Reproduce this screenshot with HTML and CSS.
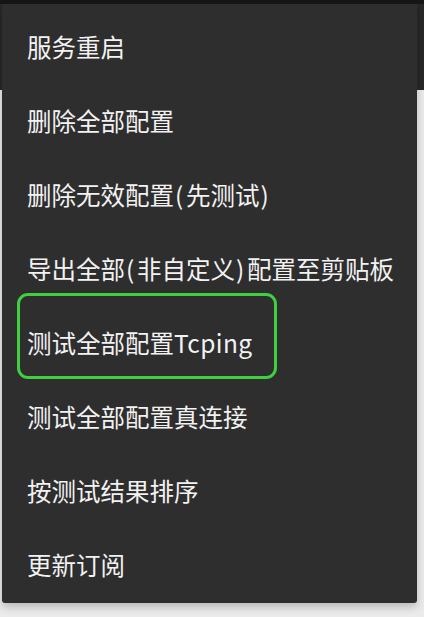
FILE: index.html
```html
<!DOCTYPE html>
<html>
<head>
  <meta charset="UTF-8" />
  <title>菜单</title>
  <link rel="stylesheet" href="styles.css">
</head>
<body>

  <div id="status-bar"></div>
  <div id="toolbar"></div>
  <div id="content"></div>

  <div id="popup-menu">
    <div class="menu-item">服务重启</div>
    <div class="menu-item">删除全部配置</div>
    <div class="menu-item">删除无效配置<span class="paren">(</span>先测试<span class="paren">)</span></div>
    <div class="menu-item">导出全部<span class="paren">(</span>非自定义<span class="paren">)</span>配置至剪贴板</div>
    <div class="menu-item marked">测试全部配置<span class="latin">Tcping</span></div>
    <div class="menu-item">测试全部配置真连接</div>
    <div class="menu-item">按测试结果排序</div>
    <div class="menu-item">更新订阅</div>
  </div>

</body>
</html>
```

FILE: styles.css
```css
html, body {
  margin: 0;
  height: 100%;
  overflow: hidden;
  background-color: #ebebeb;
  font-family: "Noto Sans CJK SC", "Noto Sans", sans-serif;
}

#status-bar {
  height: 4px;
  background-color: #161616;
}

#toolbar {
  height: 86px;
  background-color: #282828;
}

#content {
  height: 527px;
  background-color: #ebebeb;
}

#popup-menu {
  position: absolute;
  top: 4px;
  left: 2px;
  width: 415px;
  height: 599px;
  box-sizing: border-box;
  padding-top: 7px;
  background-color: #2e2e2e;
  border-radius: 0 0 3px 3px;
  box-shadow: 0 4px 8px rgba(0, 0, 0, 0.22);
}

.menu-item {
  position: relative;
  display: flex;
  align-items: center;
  height: 74px;
  box-sizing: border-box;
  padding-left: 25px;
  padding-bottom: 4px;
  font-size: 24.5px;
  color: #f2f2f2;
  white-space: nowrap;
}

.paren {
  display: inline-block;
  width: 12px;
  padding-left: 1px;
  box-sizing: border-box;
}

.latin {
  letter-spacing: 0.4px;
}

.menu-item.marked::after {
  content: "";
  position: absolute;
  top: -14px;
  left: 15px;
  width: 254px;
  height: 80px;
  border: 3px solid #3fcf3f;
  border-radius: 11px;
}
```
